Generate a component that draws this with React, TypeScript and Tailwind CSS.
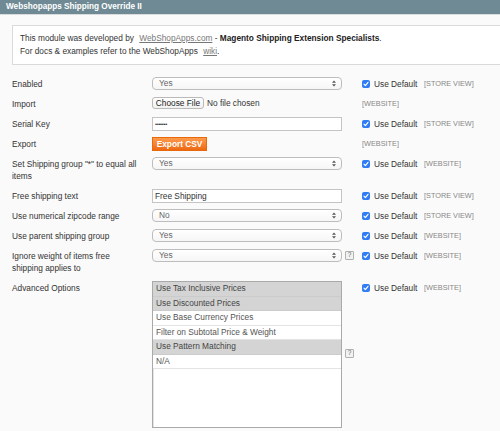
import type { ReactNode } from 'react';

/* ---------- small pieces ---------- */

function SelectBox({ value }: { value: string }) {
  return (
    <div className="flex h-[13px] items-center justify-between rounded-[4px] border border-[#bdbdbd] bg-gradient-to-b from-white to-[#f6f6f6] pl-[6px] pr-[5px] text-[#666]">
      <span className="leading-[11px]">{value}</span>
      <svg width="4" height="7" viewBox="0 0 4 7" className="text-[#555]">
        <path d="M0 2.8 L2 0.5 L4 2.8 Z" fill="currentColor" />
        <path d="M0 4.2 L2 6.5 L4 4.2 Z" fill="currentColor" />
      </svg>
    </div>
  );
}

function TextBox({ children }: { children: ReactNode }) {
  return (
    <div className="flex h-[14px] items-center border border-[#c4c4c4] bg-white pl-[2px] text-[#333]">
      {children}
    </div>
  );
}

function Help({ className = 'mt-[2px]' }: { className?: string }) {
  return (
    <div
      className={`ml-[3px] flex h-[9px] w-[9px] items-center justify-center rounded-[1px] border border-[#b0b0b0] bg-[#f2f2f2] text-[6.5px] leading-none text-[#666] ${className}`}
    >
      ?
    </div>
  );
}

function UseDefault() {
  return (
    <div className="flex w-[62px] shrink-0 items-center gap-[4px] leading-[12px] text-[#333]">
      <span className="flex h-[8px] w-[8px] items-center justify-center rounded-[2px] bg-[#2f7cf4]">
        <svg width="6" height="6" viewBox="0 0 6 6">
          <path d="M1 3.2 L2.4 4.6 L5 1.3" fill="none" stroke="white" strokeWidth="1.2" strokeLinecap="round" strokeLinejoin="round" />
        </svg>
      </span>
      <span>Use Default</span>
    </div>
  );
}

function Scope({ label }: { label: string }) {
  return <span className="text-[7.3px] leading-[12px] text-[#888]">[{label}]</span>;
}

type RowProps = {
  label: string;
  children: ReactNode;
  help?: ReactNode;
  useDefault?: boolean;
  scope: string;
};

function Row({ label, children, help, useDefault = true, scope }: RowProps) {
  return (
    <div className="flex py-[3px]">
      <div className="w-[140px] shrink-0 pb-[1px] pr-[13px] pt-[1px] leading-[12px] text-[#333]">{label}</div>
      <div className="w-[190px] shrink-0">{children}</div>
      <div className="w-[20px] shrink-0">{help}</div>
      <div className="flex items-start pt-[1px]">
        {useDefault && <UseDefault />}
        <Scope label={scope} />
      </div>
    </div>
  );
}

/* ---------- advanced options ---------- */

const options = [
  { label: 'Use Tax Inclusive Prices', selected: true },
  { label: 'Use Discounted Prices', selected: true },
  { label: 'Use Base Currency Prices', selected: false },
  { label: 'Filter on Subtotal Price & Weight', selected: false },
  { label: 'Use Pattern Matching', selected: true },
  { label: 'N/A', selected: false },
];

function MultiSelect() {
  return (
    <div>
      <div className="h-[147px] overflow-hidden border border-[#a9a9a9] bg-white shadow-[inset_1px_1px_0_#e4e4e4]">
        {options.map((o) => (
          <div
            key={o.label}
            className={`h-[14.5px] truncate border-b pl-[3px] leading-[13.5px] ${
              o.selected ? 'border-[#cbcbcb] bg-[#d4d4d4] text-[#444]' : 'border-[#e3e3e3] bg-white text-[#555]'
            }`}
          >
            {o.label}
          </div>
        ))}
      </div>
      <div className="mt-[2px] pl-[10px] leading-[12px] text-[#555]">Hold Ctrl to select multiple options</div>
    </div>
  );
}

/* ---------- page ---------- */

export default function App() {
  return (
    <div className="h-[431px] w-[500px] overflow-hidden bg-[#fafafa] font-['Liberation_Sans',Arial,sans-serif] text-[8.3px]">
      <div className="h-[15px] border-b border-[#d8dcdd] bg-[#6f8a94] pl-[6px] text-[8.2px] font-bold leading-[14px] text-white">
        Webshopapps Shipping Override II
      </div>

      <div className="pl-[12px]">
        <div className="-mr-[30px] mt-[10px] border border-[#dadada] bg-white px-[7px] py-[6px] leading-[13px] text-[#333]">
          <div>
            This module was developed by{' '}
            <span className="ml-[3px] text-[#777] underline">WebShopApps.com</span> -{' '}
            <span className="font-bold text-[#222]">Magento Shipping Extension Specialists</span>.
          </div>
          <div>
            For docs &amp; examples refer to the WebShopApps{' '}
            <span className="ml-[3px] text-[#777] underline">wiki</span>.
          </div>
        </div>

        <div className="mt-[9px]">
          <Row label="Enabled" scope="STORE VIEW">
            <SelectBox value="Yes" />
          </Row>
          <Row label="Import" scope="WEBSITE" useDefault={false}>
            <div className="flex items-center gap-[3px]">
              <span className="flex h-[12px] w-[52px] items-center justify-center rounded-[3px] border border-[#b9b9b9] bg-gradient-to-b from-white to-[#f1f1f1] text-[#222]">
                Choose File
              </span>
              <span className="text-[#333]">No file chosen</span>
            </div>
          </Row>
          <Row label="Serial Key" scope="STORE VIEW">
            <TextBox>
              <span className="text-[6px] tracking-[-0.4px] text-[#333]">•••••••</span>
            </TextBox>
          </Row>
          <Row label="Export" scope="WEBSITE" useDefault={false}>
            <span className="flex h-[14px] w-[55px] items-center justify-center border border-[#e8680c] bg-gradient-to-b from-[#fd9b4b] to-[#ee690e] font-bold text-white">
              Export CSV
            </span>
          </Row>
          <Row label={'Set Shipping group "*" to equal all items'} scope="WEBSITE">
            <SelectBox value="Yes" />
          </Row>
          <Row label="Free shipping text" scope="STORE VIEW">
            <TextBox>Free Shipping</TextBox>
          </Row>
          <Row label="Use numerical zipcode range" scope="STORE VIEW">
            <SelectBox value="No" />
          </Row>
          <Row label="Use parent shipping group" scope="WEBSITE">
            <SelectBox value="Yes" />
          </Row>
          <Row label="Ignore weight of items free shipping applies to" scope="WEBSITE" help={<Help />}>
            <SelectBox value="Yes" />
          </Row>
          <Row label="Advanced Options" scope="WEBSITE" help={<Help className="mt-[68px]" />}>
            <MultiSelect />
          </Row>
        </div>
      </div>
    </div>
  );
}
